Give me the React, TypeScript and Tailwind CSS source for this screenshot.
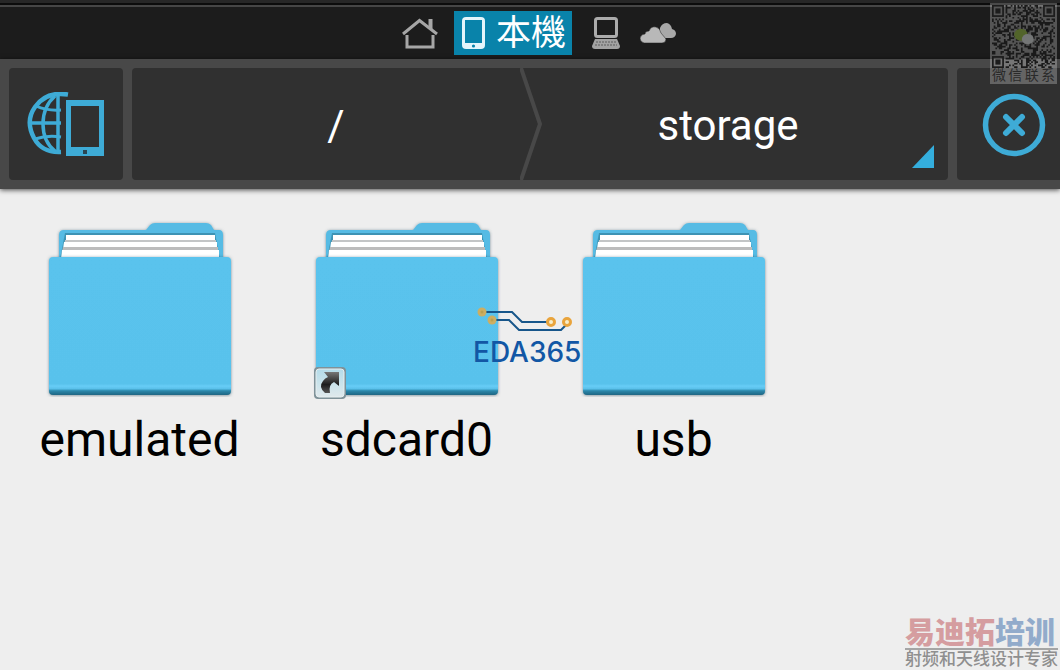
import type { ReactNode } from "react";

interface FileEntry {
  name: string;
  isLink?: boolean;
}

const ENTRIES: FileEntry[] = [
  { name: "emulated" },
  { name: "sdcard0", isLink: true },
  { name: "usb" },
];

const QR_SIZE = 37;

function inFinder(x: number, y: number, left: number, top: number) {
  return x >= left && x < left + 8 && y >= top && y < top + 8;
}

function buildQrPath() {
  let seed = 4211;
  let path = "";
  for (let y = 0; y < QR_SIZE; y++) {
    for (let x = 0; x < QR_SIZE; x++) {
      seed = (seed * 16807) % 2147483647;
      if (
        inFinder(x, y, 0, 0) ||
        inFinder(x, y, QR_SIZE - 8, 0) ||
        inFinder(x, y, 0, QR_SIZE - 8)
      ) {
        continue;
      }
      if (seed % 100 < 48) path += `M${x} ${y}h1v1h-1z`;
    }
  }
  return path;
}

const QR_PATH = buildQrPath();

function HomeIcon() {
  return (
    <svg className="h-8 w-9" viewBox="0 0 36 32" fill="none" aria-hidden="true">
      <g stroke="#a6a6a6" strokeWidth="3">
        <path d="M1 17L17.500 3.500L35 17" />
        <path d="M28.500 12V2" strokeWidth="4" />
        <path d="M5 18V30H31V18" />
      </g>
    </svg>
  );
}

function PhoneIcon() {
  return (
    <svg className="h-8 w-6" viewBox="0 0 24 32" aria-hidden="true">
      <rect x="0" y="0" width="23" height="32" rx="4" fill="#e4f5fb" />
      <rect x="3" y="3" width="17" height="23" fill="#0983aa" />
      <circle cx="11.500" cy="29" r="1.600" fill="#0983aa" />
    </svg>
  );
}

function ComputerIcon() {
  return (
    <svg className="h-8 w-7" viewBox="0 0 28 32" fill="none" aria-hidden="true">
      <rect x="3.500" y="1.500" width="21" height="18" rx="2" stroke="#ababab" strokeWidth="3" />
      <path d="M3 22H25L28 29Q28 32 25 32H3Q0 32 0 29Z" fill="#a2a2a2" />
      <path d="M4 25H24M3 28H25" stroke="#5c5c5c" strokeWidth="1" strokeDasharray="2 1" />
    </svg>
  );
}

function CloudIcon() {
  return (
    <svg className="h-8 w-9" viewBox="0 0 36 32" aria-hidden="true">
      <path
        d="M24 21Q19 18 20 11Q22 6 27 6Q31 7 32 12Q36 13 36 17Q35 21 31 21Z"
        fill="#a8a8a8"
      />
      <path
        d="M4 26Q0 25 0 21Q1 17 5 17Q5 14 9 14Q11 9 16 10Q20 11 21 16L26 22Q26 26 22 26Z"
        fill="#b8b8b8"
        stroke="#1c1c1c"
        strokeWidth="0.500"
      />
    </svg>
  );
}

function GlobeDeviceIcon() {
  return (
    <svg className="h-16 w-20" viewBox="0 0 80 64" fill="none" aria-hidden="true">
      <g stroke="#3eabd6" strokeWidth="3.500">
        <path d="M35 60Q16 61 8 46Q-1 29 9 15Q20 -1 42 2.500" strokeWidth="4.500" />
        <path d="M32 3V60M3 31H35" />
        <path d="M29 4C13 18 13 46 29 59" />
        <path d="M10 14Q21 19 35 18M9 47Q21 43 35 45" strokeWidth="3" />
      </g>
      <path
        d="M40 8H78V64H40ZM45 14V55H73V14Z"
        fill="#3eabd6"
        fillRule="evenodd"
      />
      <rect x="57" y="58" width="4" height="4" fill="#294653" />
    </svg>
  );
}

function FolderIcon() {
  return (
    <svg className="h-[180px] w-[190px]" viewBox="0 0 190 180" aria-hidden="true">
      <defs>
        <linearGradient id="folder-front" x1="0" y1="0" x2="0" y2="1">
          <stop offset="0" stopColor="#5ac3ed" />
          <stop offset="0.920" stopColor="#59c2ec" />
          <stop offset="0.935" stopColor="#68cdf7" />
          <stop offset="0.955" stopColor="#59c0ea" />
          <stop offset="0.970" stopColor="#2b87aa" />
          <stop offset="1" stopColor="#1f6683" />
        </linearGradient>
        <filter id="folder-shadow" x="-5%" y="-5%" width="110%" height="112%">
          <feDropShadow dx="0" dy="0.500" stdDeviation="1.500" floodColor="#2b5060" floodOpacity="0.600" />
        </filter>
      </defs>
      <g filter="url(#folder-shadow)">
        <path
          d="M14 50V18Q14 13 19 13H101L105 8Q107 6 110 6H161Q164 6 166 8L169 13H174Q178 13 178 18V50Z"
          fill="#56bbe4"
        />
      </g>
      <path d="M20 16H170L175 42H15Z" fill="#3d93b4" />
      <path d="M21 18H170V25H21Z" fill="#fff" />
      <path d="M20 23H171V31H19Z" fill="#c3c5c6" />
      <path d="M19 25H172V32H18Z" fill="#fff" />
      <path d="M18 30H173V35H17Z" fill="#bcbcbc" />
      <path d="M17 33H174V42H16Z" fill="#fff" />
      <rect
        x="4"
        y="40"
        width="182"
        height="138"
        rx="4"
        fill="url(#folder-front)"
        filter="url(#folder-shadow)"
      />
    </svg>
  );
}

function LinkBadge() {
  return (
    <svg
      className="absolute -bottom-0.5 left-0.5 h-8 w-8"
      viewBox="0 0 32 32"
      aria-hidden="true"
    >
      <defs>
        <linearGradient id="badge" x1="0" y1="0" x2="0" y2="1">
          <stop offset="0" stopColor="#b4dcea" />
          <stop offset="1" stopColor="#dfe9ec" />
        </linearGradient>
        <linearGradient id="badge-arrow" x1="0" y1="0" x2="0" y2="1">
          <stop offset="0" stopColor="#777" />
          <stop offset="0.600" stopColor="#1c1c1c" />
          <stop offset="1" stopColor="#555" />
        </linearGradient>
      </defs>
      <rect x="0" y="0" width="32" height="32" rx="4" fill="#7f9299" />
      <rect x="2" y="2" width="28" height="28" rx="3" fill="url(#badge)" stroke="#e6eef0" />
      <path
        d="M10 5H25V19L20 15Q14 18 16 26H11Q4 20 9 14Q11 11 14 10Z"
        fill="url(#badge-arrow)"
      />
    </svg>
  );
}

function TabButton({ label, children }: { label: string; children: ReactNode }) {
  return (
    <button
      type="button"
      aria-label={label}
      className="flex w-9 items-center justify-center"
    >
      {children}
    </button>
  );
}

function CircuitLogo() {
  return (
    <div className="pointer-events-none absolute top-[306px] left-[473px]">
      <svg className="h-7 w-[110px]" viewBox="0 0 110 28" fill="none" aria-hidden="true">
        <g stroke="#17568a" strokeWidth="2">
          <path d="M13 6H39L49 16H75" />
          <path d="M23 14H36L46 24H88L94 18" />
        </g>
        <circle cx="9" cy="6" r="4.500" fill="#cdae62" />
        <circle cx="9" cy="6" r="1.500" fill="#bba04f" />
        <circle cx="19" cy="14" r="4.500" fill="#cdae62" />
        <circle cx="19" cy="14" r="1.500" fill="#bba04f" />
        <circle cx="78" cy="16" r="3.500" fill="#f6eecb" stroke="#e9a43c" strokeWidth="3" />
        <circle cx="94" cy="16" r="3.500" fill="#f6eecb" stroke="#e9a43c" strokeWidth="3" />
      </svg>
      <p className="font-[Inter,sans-serif] text-[28px] leading-9 font-medium text-[#1257a5]">
        EDA365
      </p>
    </div>
  );
}

function QrCard() {
  return (
    <div className="pointer-events-none absolute top-[3px] right-[3px] w-[67px] bg-white/25 p-0.5">
      <svg
        className="block h-[63px] w-full"
        viewBox={`0 0 ${QR_SIZE} ${QR_SIZE}`}
        aria-hidden="true"
      >
        <path d={QR_PATH} fill="#1a1a1a" />
        {[
          [0, 0],
          [QR_SIZE - 7, 0],
          [0, QR_SIZE - 7],
        ].map(([x, y]) => (
          <g key={`${x}-${y}`}>
            <rect x={x + 0.5} y={y + 0.5} width="6" height="6" fill="none" stroke="#1c1c1c" />
            <rect x={x + 2} y={y + 2} width="3" height="3" fill="#1c1c1c" />
          </g>
        ))}
        <ellipse cx="17" cy="17.500" rx="4" ry="3.500" fill="#52642a" />
        <ellipse cx="21" cy="20" rx="3.500" ry="3" fill="#747676" />
      </svg>
      <p className="flex justify-between font-['Liberation_Sans','Noto_Sans_CJK_SC',sans-serif] text-sm leading-[14px] text-[#2a2a2a]">
        {["微", "信", "联", "系"].map((char) => (
          <span key={char}>{char}</span>
        ))}
      </p>
    </div>
  );
}

function TrainingMark() {
  return (
    <div className="pointer-events-none absolute right-0.5 bottom-0 font-['Liberation_Sans','Noto_Sans_CJK_SC',sans-serif]">
      <p className="border-b-2 border-[#a5a5a5] text-[30px] leading-[30px] font-black text-[#d59da0]">
        易迪拓<span className="text-[#92abcb]">培训</span>
      </p>
      <p className="text-[17px] leading-5 font-medium text-[#8f8f8f]">
        射频和天线设计专家
      </p>
    </div>
  );
}

export default function App() {
  return (
    <div className="relative min-h-screen overflow-hidden bg-[#eee] font-[Roboto,sans-serif]">
      <div className="h-[3px] bg-[#272727]" />
      <div className="h-1 border-t-2 border-b-2 border-t-[#0c0c0c] border-b-[#464646]" />

      <nav className="flex h-[52px] items-center justify-center gap-4 bg-[#1c1c1c] pl-[18px]">
        <TabButton label="Home">
          <HomeIcon />
        </TabButton>
        <button
          type="button"
          className="flex h-11 items-center gap-2.5 bg-[#0983aa] pr-1.5 pl-2 font-['Liberation_Sans','Noto_Sans_CJK_TC',sans-serif] text-[35px] leading-[44px] text-white"
        >
          <PhoneIcon />
          本機
        </button>
        <TabButton label="Network">
          <ComputerIcon />
        </TabButton>
        <TabButton label="Cloud">
          <CloudIcon />
        </TabButton>
      </nav>

      <header className="flex h-[130px] gap-[9px] bg-[#484848] py-[9px] pl-[9px] shadow-[0_1px_5px_rgba(0,0,0,0.7)]">
        <button
          type="button"
          aria-label="Locations"
          className="flex w-[114px] items-center justify-center rounded bg-[#303030]"
        >
          <GlobeDeviceIcon />
        </button>

        <div className="relative flex flex-1 rounded bg-[#303030] text-[42px] text-white">
          <button type="button" className="flex-1 pt-0.5 pl-5">
            /
          </button>
          <svg className="h-full w-6" viewBox="0 0 24 112" fill="none" aria-hidden="true">
            <path d="M1 0L20 56L1 112" stroke="#484848" strokeWidth="4" />
          </svg>
          <button type="button" className="flex-1 pt-0.5 pr-9">
            storage
          </button>
          <svg
            className="absolute right-3.5 bottom-3 h-[23px] w-[22px]"
            viewBox="0 0 22 23"
            aria-hidden="true"
          >
            <path d="M22 0V23H0Z" fill="#34aedd" />
          </svg>
        </div>

        <button
          type="button"
          aria-label="Close"
          className="flex w-[103px] items-center rounded-l bg-[#303030] pt-0.5 pl-[25px]"
        >
          <svg className="h-16 w-16" viewBox="0 0 64 64" fill="none" aria-hidden="true">
            <circle cx="32" cy="32" r="28.500" stroke="#3eabd6" strokeWidth="5.500" />
            <path
              d="M24 24L40 40M40 24L24 40"
              stroke="#3eabd6"
              strokeWidth="6"
              strokeLinecap="round"
            />
          </svg>
        </button>
      </header>

      <main className="grid grid-cols-[repeat(auto-fill,267px)] px-1.5 pt-7">
        {ENTRIES.map((entry) => (
          <button
            key={entry.name}
            type="button"
            className="flex flex-col items-center text-black"
          >
            <span className="relative">
              <FolderIcon />
              {entry.isLink && <LinkBadge />}
            </span>
            <span className="mt-4 text-[48px] leading-[54px]">{entry.name}</span>
          </button>
        ))}
      </main>

      <CircuitLogo />
      <QrCard />
      <TrainingMark />
    </div>
  );
}
